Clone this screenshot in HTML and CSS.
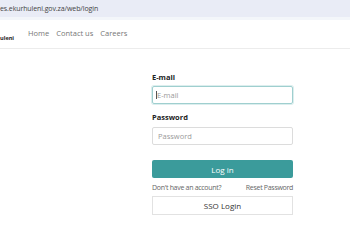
FILE: index.html
```html
<!DOCTYPE html>
<html>
<head>
<meta charset="utf-8">
<link rel="stylesheet" href="styles.css">
</head>
<body>
<div class="urlbar"><span class="url">es.ekurhuleni.gov.za/web/login</span></div>
<div class="strip"></div>
<header class="header">
  <span class="brand">uleni</span>
  <nav class="nav">
    <a class="nav-link">Home</a>
    <a class="nav-link">Contact us</a>
    <a class="nav-link">Careers</a>
  </nav>
</header>
<main class="main">
  <form class="login">
    <label class="label">E-mail</label>
    <div class="input focus"><span class="caret"></span><span class="ph">E-mail</span></div>
    <label class="label label-pw">Password</label>
    <div class="input"><span class="ph">Password</span></div>
    <div class="btn-primary">Log in</div>
    <div class="links"><span>Don't have an account?</span><span>Reset Password</span></div>
    <div class="btn-sso">SSO Login</div>
  </form>
</main>
</body>
</html>
```

FILE: styles.css
```css
html, body {
  margin: 0;
  padding: 0;
  background: #fff;
  font-family: "Open Sans", "Noto Sans", sans-serif;
  color: #333;
}
.urlbar {
  height: 17px;
  background: #e9ecf6;
  display: flex;
  align-items: center;
}
.url {
  font-size: 7px;
  color: #444;
  letter-spacing: -0.1px;
}
.strip {
  height: 3px;
  background: #f3f6fa;
}
.header {
  height: 28px;
  border-bottom: 1px solid #ececec;
  display: flex;
  align-items: center;
}
.brand {
  font-size: 5.6px;
  font-weight: 700;
  color: #222;
  align-self: flex-end;
  margin-bottom: 6px;
  width: 28px;
}
.nav {
  display: flex;
  gap: 7px;
  margin-top: -2px;
}
.nav-link {
  font-size: 7.5px;
  color: #777;
}
.main {
  display: flex;
  padding-left: 152px;
  padding-top: 23px;
}
.login {
  width: 141px;
  display: flex;
  flex-direction: column;
  margin: 0;
}
.label {
  font-size: 7.5px;
  font-weight: 700;
  color: #222;
  height: 10px;
  line-height: 10px;
  margin-bottom: 4px;
}
.label-pw {
  margin-top: 8px;
  margin-bottom: 5px;
}
.input {
  height: 16px;
  border: 1px solid #dcdcdc;
  border-radius: 2px;
  display: flex;
  align-items: center;
  padding-left: 5px;
}
.input.focus {
  border-color: #9fcfcf;
  box-shadow: 0 0 0 1px #dceeee;
  padding-left: 3px;
}
.caret {
  width: 1px;
  height: 8px;
  background: #555;
}
.ph {
  font-size: 7.5px;
  color: #9a9a9a;
}
.btn-primary {
  margin-top: 15px;
  height: 18px;
  background: #3b9b9b;
  border-radius: 2px;
  color: #fff;
  font-size: 8px;
  display: flex;
  align-items: center;
  justify-content: center;
}
.links {
  display: flex;
  justify-content: space-between;
  font-size: 7px;
  letter-spacing: -0.3px;
  color: #666;
  margin-top: 5px;
  height: 10px;
  line-height: 10px;
}
.btn-sso {
  margin-top: 3px;
  height: 17px;
  border: 1px solid #e2e2e2;
  color: #333;
  font-size: 8px;
  display: flex;
  align-items: center;
  justify-content: center;
}
```
